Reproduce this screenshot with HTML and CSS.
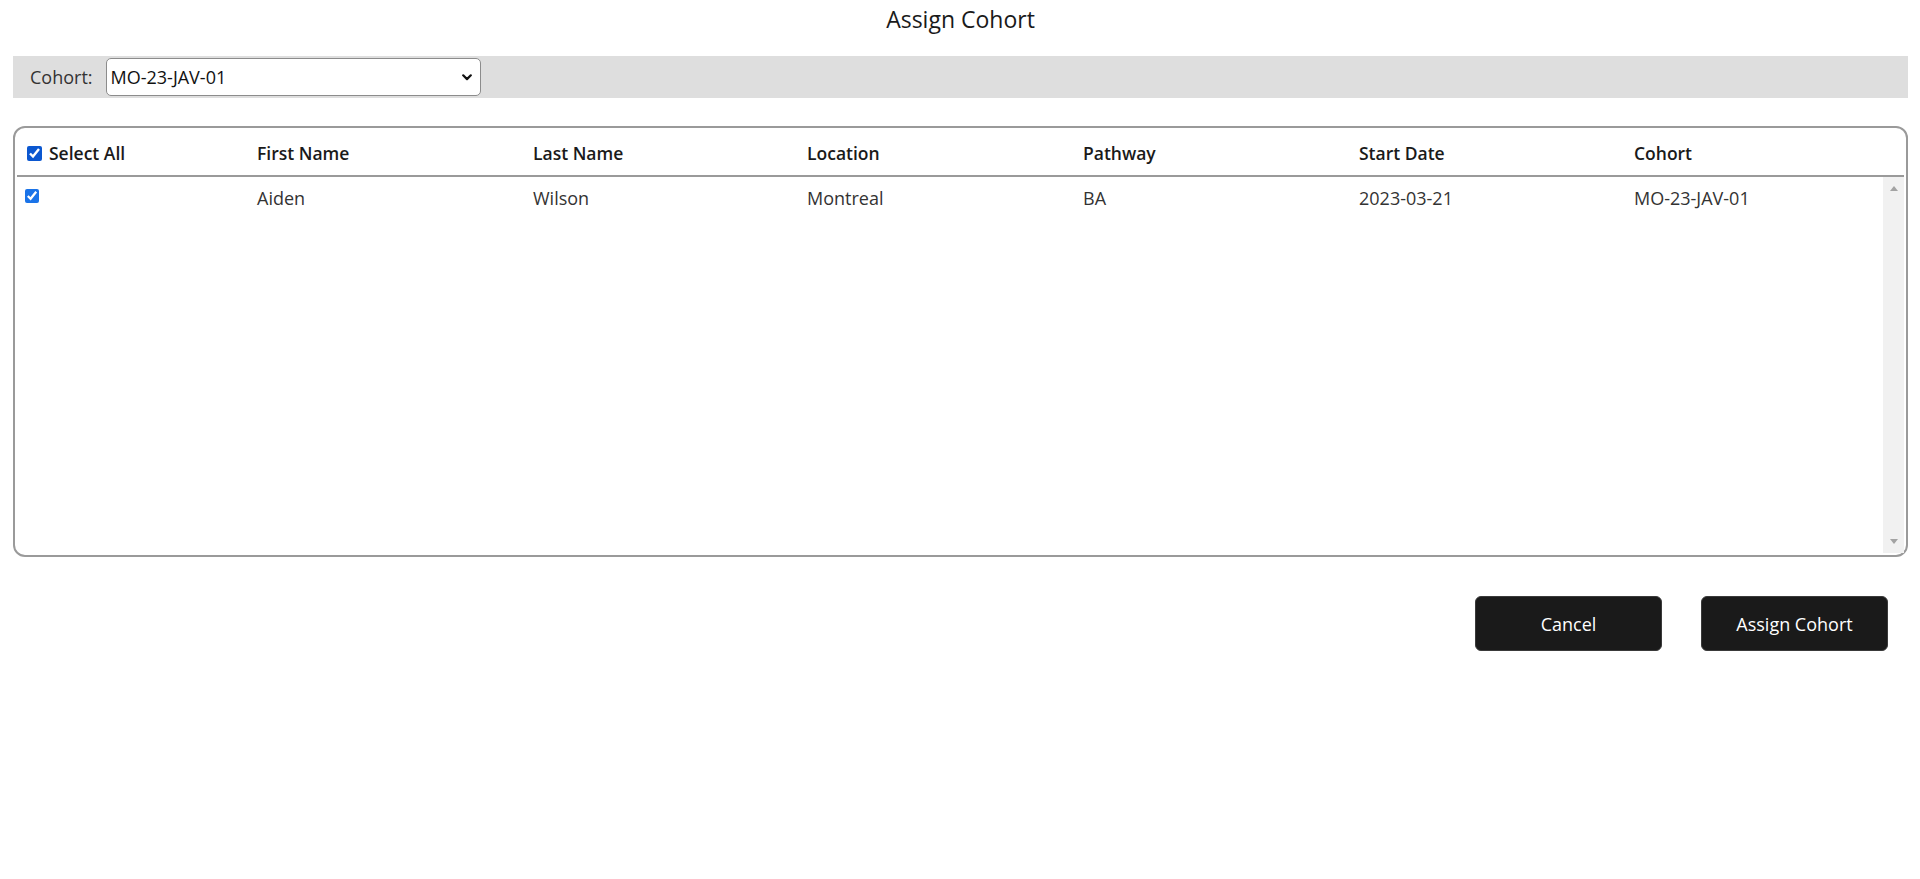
FILE: index.html
```html
<!DOCTYPE html>
<html lang="en">
<head>
<meta charset="utf-8">
<title>Assign Cohort</title>
<link rel="stylesheet" href="styles.css">
</head>
<body>
<div class="page">
  <h1 class="title">Assign Cohort</h1>
  <div class="filter-bar">
    <label class="filter-label" for="cohort">Cohort:</label>
    <div class="select-wrap">
      <select id="cohort" class="select">
        <option>MO-23-JAV-01</option>
      </select>
      <svg class="chev" width="10" height="7" viewBox="0 0 10 7" aria-hidden="true"><path d="M1.2 1.3 L5 5.1 L8.8 1.3" fill="none" stroke="#111" stroke-width="2.2" stroke-linecap="round" stroke-linejoin="round"/></svg>
    </div>
  </div>

  <div class="table-box">
    <div class="grid thead">
      <div class="cell first"><input type="checkbox" class="cb cb-head" checked><span>Select All</span></div>
      <div class="cell">First Name</div>
      <div class="cell">Last Name</div>
      <div class="cell">Location</div>
      <div class="cell">Pathway</div>
      <div class="cell">Start Date</div>
      <div class="cell">Cohort</div>
    </div>
    <div class="tbody-wrap">
      <div class="tbody">
        <div class="grid row">
          <div class="cell first"><input type="checkbox" class="cb cb-row" checked></div>
          <div class="cell">Aiden</div>
          <div class="cell">Wilson</div>
          <div class="cell">Montreal</div>
          <div class="cell">BA</div>
          <div class="cell">2023-03-21</div>
          <div class="cell">MO-23-JAV-01</div>
        </div>
      </div>
      <div class="scrollbar">
        <span class="arrow up"></span>
        <span class="arrow down"></span>
      </div>
    </div>
  </div>

  <div class="actions">
    <button class="btn" type="button">Cancel</button>
    <button class="btn" type="button">Assign Cohort</button>
  </div>
</div>
</body>
</html>
```
FILE: styles.css
```css
* { box-sizing: border-box; }

html, body {
  margin: 0;
  background: #fff;
}

body {
  font-family: "Open Sans", "Liberation Sans", sans-serif;
  color: #222;
}

.page {
  padding: 0 12px 0 13px;
}

.title {
  margin: 0;
  padding-top: 4px;
  text-align: center;
  font-size: 23px;
  font-weight: 500;
  line-height: 31px;
  color: #1a1a1a;
}

.filter-bar {
  margin-top: 21px;
  height: 42px;
  display: flex;
  align-items: center;
  gap: 13px;
  padding-left: 17px;
  background: #dedede;
}

.filter-label {
  font-size: 18px;
  color: #333;
}

.select-wrap {
  position: relative;
  width: 375px;
  height: 38px;
}

.select {
  width: 100%;
  height: 100%;
  appearance: none;
  -webkit-appearance: none;
  border: 1px solid #8c8c8c;
  border-radius: 5px;
  background: #fff;
  padding: 0 30px 0 4px;
  font-family: "Open Sans", "Liberation Sans", sans-serif;
  font-size: 18px;
  color: #111;
}

.chev {
  position: absolute;
  right: 9px;
  top: 16px;
  pointer-events: none;
}

.table-box {
  margin-top: 28px;
  height: 431px;
  border: 2px solid #9a9a9a;
  border-radius: 12px;
  padding: 2px;
  display: flex;
  flex-direction: column;
}

.grid {
  display: grid;
  grid-template-columns: 230px 276px 274px 276px 276px 275px minmax(0, 1fr);
}

.cell {
  padding-left: 10px;
  font-size: 18px;
  line-height: 24px;
  white-space: nowrap;
}

.thead {
  height: 47px;
  border-bottom: 2px solid #9a9a9a;
  align-items: center;
  padding-top: 1px;
}

.thead .cell {
  font-weight: 600;
  font-size: 17.5px;
  color: #1a1a1a;
}

.thead .first {
  display: flex;
  align-items: center;
  gap: 7px;
}

.cb {
  margin: 0;
  width: 15px;
  height: 15px;
}

.cb-head { accent-color: #0b57d0; }
.cb-row { accent-color: #1a73e8; width: 14px; height: 14px; }

.tbody-wrap {
  flex: 1;
  display: flex;
  min-height: 0;
}

.tbody {
  flex: 1;
  min-width: 0;
}

.row {
  padding-top: 9px;
  align-items: start;
}

.row .cell {
  color: #333;
}

.row .first {
  padding-left: 8px;
  padding-top: 3px;
  line-height: 0;
}

.scrollbar {
  flex: 0 0 21px;
  width: 21px;
  background: #f1f1f1;
  display: flex;
  flex-direction: column;
  justify-content: space-between;
  align-items: center;
  padding: 9px 0;
}

.arrow {
  width: 0;
  height: 0;
  border-left: 4.5px solid transparent;
  border-right: 4.5px solid transparent;
}

.arrow.up { border-bottom: 5px solid #a3a3a3; }
.arrow.down { border-top: 5px solid #a3a3a3; }

.actions {
  display: flex;
  justify-content: flex-end;
  gap: 39px;
  margin-top: 39px;
  padding-right: 20px;
}

.btn {
  width: 187px;
  height: 55px;
  background: #1a1a1a;
  color: #fff;
  border: 1px solid #3a3a3a;
  border-radius: 6px;
  font-family: "Open Sans", "Liberation Sans", sans-serif;
  font-size: 18px;
}
```
